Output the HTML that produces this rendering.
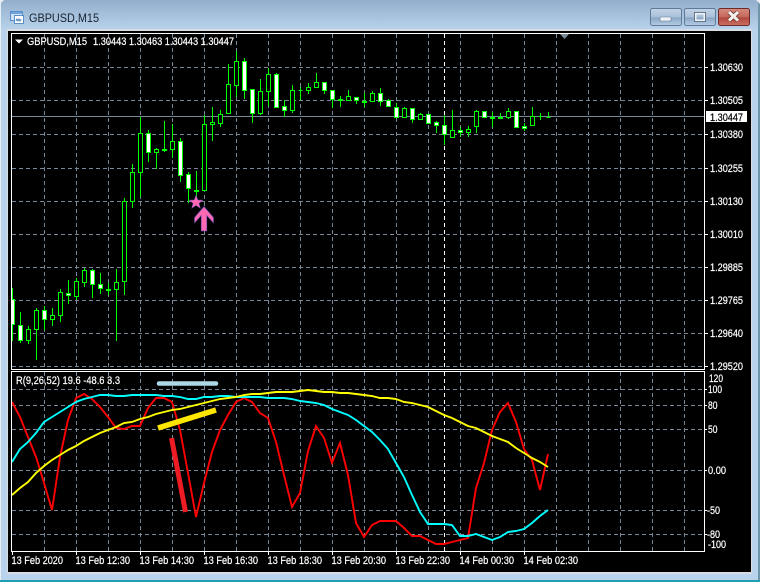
<!DOCTYPE html>
<html><head><meta charset="utf-8"><title>GBPUSD,M15</title>
<style>
html,body{margin:0;padding:0;width:760px;height:582px;overflow:hidden;background:#b9d3ec}
svg{position:absolute;left:0;top:0;display:block}
text{font-family:"Liberation Sans",sans-serif;font-size:11px;fill:#fff;stroke:#fff;stroke-width:.22px}
.g{stroke:#778899;stroke-width:1;stroke-dasharray:4 3;fill:none;shape-rendering:crispEdges}
</style></head><body>
<svg width="760" height="582" viewBox="0 0 760 582" xmlns="http://www.w3.org/2000/svg">
<defs>
<linearGradient id="tb" x1="0" y1="0" x2="0" y2="1"><stop offset="0" stop-color="#93aecb"/><stop offset="1" stop-color="#b9d3ec"/></linearGradient>
<linearGradient id="btn" x1="0" y1="0" x2="0" y2="1"><stop offset="0" stop-color="#c3d3e6"/><stop offset=".5" stop-color="#a9c0d9"/><stop offset=".55" stop-color="#8aa6c4"/><stop offset="1" stop-color="#b5cde6"/></linearGradient>
<linearGradient id="cl" x1="0" y1="0" x2="0" y2="1"><stop offset="0" stop-color="#d78d80"/><stop offset=".5" stop-color="#c4675a"/><stop offset=".55" stop-color="#b0463a"/><stop offset="1" stop-color="#cc7264"/></linearGradient>
<clipPath id="c1"><rect x="12" y="34" width="692" height="335"/></clipPath>
<clipPath id="c2"><rect x="12" y="372" width="692" height="179"/></clipPath>
</defs>
<rect width="760" height="582" fill="#b9d3ec"/>
<rect width="760" height="30" fill="url(#tb)"/>
<rect x="0" y="0" width="1" height="582" fill="#e6eef6"/>
<rect x="758" y="0" width="2" height="582" fill="#6f95a8"/>
<rect x="0" y="580" width="760" height="2" fill="#1f9fb0"/>
<path d="M0 0H4L0 4Z" fill="#e9edf1"/>
<path d="M760 0H756L760 4Z" fill="#e9edf1"/>
<!-- title icon -->
<g shape-rendering="crispEdges">
<rect x="10.500" y="11.500" width="12" height="9" fill="#cfe3f7" stroke="#5c8fc8"/>
<rect x="14.500" y="15.500" width="9" height="8" fill="#fff" stroke="#5c8fc8"/>
<rect x="11" y="12" width="11" height="2" fill="#6fa3dc"/>
<path d="M16 21l1-2 1 2 1-2 1 2 1-2" stroke="#3f78b8" fill="none"/>
</g>
<text x="29" y="22" textLength="70" lengthAdjust="spacingAndGlyphs" style="font-size:12px;fill:#17212e;stroke:none">GBPUSD,M15</text>
<!-- buttons -->
<rect x="650.500" y="8.500" width="31" height="17" rx="2" fill="url(#btn)" stroke="#5f7a98"/>
<rect x="660" y="17" width="11" height="4" rx="1" fill="#eef3f8" stroke="#65788e" stroke-width=".6"/>
<rect x="684.500" y="8.500" width="31" height="17" rx="2" fill="url(#btn)" stroke="#5f7a98"/>
<rect x="695.500" y="13.500" width="9" height="7" fill="none" stroke="#eef3f8" stroke-width="2"/>
<rect x="694.500" y="12.500" width="11" height="9" fill="none" stroke="#4d6178" stroke-width=".8"/>
<rect x="718.500" y="8.500" width="31" height="17" rx="2" fill="url(#cl)" stroke="#6e2a28"/>
<path d="M729 12l9 8.500M738 12l-9 8.500" stroke="#5a2a24" stroke-width="4.600"/>
<path d="M729 12l9 8.500M738 12l-9 8.500" stroke="#f4eeea" stroke-width="3.200"/>
<!-- window body -->
<rect x="7" y="29" width="745" height="545" fill="#d8dde3"/>
<rect x="8" y="31" width="743" height="541" fill="#000"/>
<!-- main grid -->
<g clip-path="url(#c1)">
<path class="g" d="M12 67.500H704M12 100.500H704M12 134.500H704M12 168.500H704M12 201.500H704M12 234.500H704M12 267.500H704M12 300.500H704M12 333.500H704M12 366.500H704"/>
<path class="g" d="M44.500 34V369M76.500 34V369M108.500 34V369M140.500 34V369M172.500 34V369M204.500 34V369M236.500 34V369M268.500 34V369M300.500 34V369M332.500 34V369M364.500 34V369M396.500 34V369M428.500 34V369M460.500 34V369M492.500 34V369M524.500 34V369M556.500 34V369M588.500 34V369M620.500 34V369M652.500 34V369M684.500 34V369"/>
<path d="M444.500 34V369" stroke="#fff" stroke-dasharray="4 3" shape-rendering="crispEdges"/>
<path d="M12 116.500H704" stroke="#778899" shape-rendering="crispEdges"/>
<!-- wicks -->
<path shape-rendering="crispEdges" stroke="#00ff00" fill="none" d="M12.500 288V341M20.500 312V343M28.500 326V344M36.500 308V360M44.500 306V330M52.500 308V326M60.500 289V322M68.500 280V304M76.500 278V300M84.500 268V287M92.500 269V298M100.500 273V294M108.500 283V295M116.500 269V341M124.500 198V295M132.500 164V208M140.500 117V197M148.500 130V162M156.500 148V169M164.500 121V152M172.500 124V158M180.500 138V182M188.500 172V203M196.500 171V197M204.500 115V191M212.500 107V141M220.500 110V127M228.500 64V114M236.500 51V97M244.500 58V99M252.500 89V123M260.500 79V115M268.500 68V106M276.500 73V107M284.500 100V117M292.500 85V113M300.500 87V100M308.500 83V94M316.500 73V87M324.500 82V94M332.500 90V108M340.500 96V107M348.500 90V100M356.500 97V104M364.500 93V107M372.500 91V102M380.500 88V106M388.500 99V106M396.500 103V117M404.500 107V117M412.500 108V123M420.500 113V119M428.500 114V123M436.500 121V133M444.500 115V145M452.500 110V137M460.500 127V137M468.500 126V137M476.500 110V133M484.500 111V117M492.500 112V127M500.500 113V119M508.500 108V119M516.500 111V127M524.500 123V131M532.500 107V125M540.500 113V120M548.500 112V117"/>
<!-- hollow -->
<path shape-rendering="crispEdges" stroke="#00ff00" fill="#000" d="M26.500 329.500h4v11h-4zM34.500 310.500h4v19h-4zM50.500 315.500h4v4h-4zM58.500 292.500h4v23h-4zM74.500 281.500h4v15h-4zM82.500 270.500h4v12h-4zM114.500 282.500h4v7h-4zM122.500 201.500h4v80h-4zM130.500 172.500h4v29h-4zM138.500 133.500h4v39h-4zM154.500 149.500h4v3h-4zM170.500 141.500h4v8h-4zM202.500 124.500h4v66h-4zM210.500 122.500h4v2h-4zM218.500 114.500h4v9h-4zM226.500 84.500h4v29h-4zM234.500 61.500h4v24h-4zM258.500 91.500h4v22h-4zM266.500 74.500h4v17h-4zM290.500 90.500h4v20h-4zM306.500 87.500h4v3h-4zM314.500 82.500h4v5h-4zM346.500 96.500h4v4h-4zM370.500 93.500h4v8h-4zM402.500 108.500h4v9h-4zM418.500 114.500h4v5h-4zM450.500 130.500h4v7h-4zM466.500 129.500h4v3h-4zM474.500 111.500h4v15h-4zM506.500 111.500h4v6h-4zM530.500 116.500h4v9h-4z"/>
<!-- white -->
<path shape-rendering="crispEdges" stroke="#00ff00" fill="#fff" d="M10.500 299.500h4v25h-4zM18.500 325.500h4v15h-4zM42.500 310.500h4v9h-4zM66.500 293.500h4v2h-4zM90.500 270.500h4v14h-4zM98.500 284.500h4v4h-4zM146.500 133.500h4v19h-4zM178.500 141.500h4v34h-4zM186.500 174.500h4v14h-4zM242.500 61.500h4v29h-4zM250.500 89.500h4v24h-4zM274.500 74.500h4v33h-4zM282.500 106.500h4v4h-4zM322.500 82.500h4v8h-4zM330.500 90.500h4v9h-4zM354.500 97.500h4v3h-4zM378.500 93.500h4v8h-4zM386.500 100.500h4v6h-4zM394.500 107.500h4v10h-4zM410.500 108.500h4v11h-4zM426.500 114.500h4v9h-4zM434.500 122.500h4v3h-4zM442.500 125.500h4v9h-4zM458.500 130.500h4v2h-4zM482.500 111.500h4v6h-4zM514.500 111.500h4v16h-4zM522.500 126.500h4v2h-4z"/>
<!-- doji -->
<path shape-rendering="crispEdges" stroke="#00ff00" fill="#00ff00" d="M106.500 289.500h4v1h-4zM162.500 149.500h4v1h-4zM194.500 190.500h4v1h-4zM298.500 90.500h4v0h-4zM338.500 99.500h4v1h-4zM362.500 101.500h4v1h-4zM490.500 117.500h4v1h-4zM498.500 117.500h4v1h-4zM538.500 116.500h4v0h-4zM546.500 117.500h4v0h-4z"/>
</g>
<!-- star and arrow -->
<path d="M196 195l1.900 5 5.200.1-4.100 3.200 1.500 5.100-4.500-3-4.400 3 1.500-5.100-4.200-3.200 5.300-.1z" fill="#ff69b4" stroke="#5a4ab0" stroke-width=".5"/>
<path d="M204 206.500l9.500 11v5.500l-6.700-7.500V231h-5.600V215.500L194.500 223v-5.500z" fill="#ff69b4" stroke="#5f46a8" stroke-width=".6"/>
<!-- chart borders -->
<rect x="11.500" y="33.500" width="693" height="336" fill="none" stroke="#fff" shape-rendering="crispEdges"/>
<path d="M560 34h9l-4.500 5z" fill="#778899"/>
<text x="27" y="45" textLength="60" lengthAdjust="spacingAndGlyphs">GBPUSD,M15</text>
<text x="93" y="45" textLength="141" lengthAdjust="spacingAndGlyphs">1.30443 1.30463 1.30443 1.30447</text>
<path d="M15 39.500h8l-4 4z" fill="#fff"/>
<!-- sub window -->
<g clip-path="url(#c2)">
<path class="g" d="M12 389.500H704M12 405.500H704M12 429.500H704M12 470.500H704M12 510.500H704M12 534.500H704"/>
<path class="g" d="M44.500 372V551M76.500 372V551M108.500 372V551M140.500 372V551M172.500 372V551M204.500 372V551M236.500 372V551M268.500 372V551M300.500 372V551M332.500 372V551M364.500 372V551M396.500 372V551M428.500 372V551M460.500 372V551M492.500 372V551M524.500 372V551M556.500 372V551M588.500 372V551M620.500 372V551M652.500 372V551M684.500 372V551"/>
<path d="M444.500 372V551" stroke="#fff" stroke-dasharray="4 3" shape-rendering="crispEdges"/>
<polyline fill="none" stroke="#ff0000" stroke-width="1.900" points="12,402 20,417 28,437 36,457 44,483 52,510 60,457 68,420 76,398 84,394 92,399 100,407 108,417 116,428 124,429 132,426 140,426 148,408 156,398 164,398 172,402 180,430 188,473 196,517 204,483 212,452 220,430 228,415 236,402 244,398 252,402 260,413 268,418 276,442 284,475 292,507 300,493 308,451 316,426 324,438 332,463 340,443 348,475 356,523 364,537 372,525 380,521 388,521 396,521 404,528 412,536 420,536 428,540 436,544 444,544 452,542 460,540 468,538 476,488 484,463 492,430 500,412 508,403 516,422 524,449 532,460 540,490 548,454"/>
<polyline fill="none" stroke="#00ffff" stroke-width="1.900" points="12,462 20,449 28,442 36,433 44,422 52,417 60,412 68,407 76,402 84,399 92,397 100,395 108,395 116,396 124,396 132,395 140,395 148,395 156,395 164,396 172,396 180,397 188,399 196,399 204,397 212,397 220,396 228,396 236,397 244,397 252,397 260,397 268,398 276,398 284,398 292,399 300,401 308,402 316,403 324,405 332,409 340,412 348,415 356,420 364,426 372,432 380,440 388,449 396,463 404,477 412,495 420,512 428,524 436,524 444,524 452,525 460,536 468,536 476,534 484,537 492,540 500,537 508,532 516,531 524,529 532,523 540,516 548,510"/>
<polyline fill="none" stroke="#ffff00" stroke-width="1.900" points="12,495 20,488 28,482 36,473 44,466 52,460 60,455 68,450 76,446 84,441 92,437 100,433 108,430 116,427 124,423 132,422 140,419 148,417 156,414 164,412 172,410 180,409 188,407 196,405 204,403 212,401 220,399 228,398 236,397 244,395 252,394 260,394 268,393 276,392 284,392 292,392 300,391 308,390 316,391 324,392 332,392 340,393 348,393 356,394 364,395 372,396 380,398 388,398 396,399 404,402 412,403 420,405 428,407 436,411 444,415 452,418 460,422 468,426 476,428 484,432 492,436 500,439 508,442 516,448 524,453 532,458 540,462 548,467"/>
</g>
<path d="M159 383.500H216" stroke="#add8e6" stroke-width="4.500" stroke-linecap="round"/>
<path d="M158 428L216 410" stroke="#ffe600" stroke-width="5.500"/>
<path d="M171.500 438L185.500 512" stroke="#ed1c24" stroke-width="5"/>
<rect x="11.500" y="371.500" width="693" height="180" fill="none" stroke="#fff" shape-rendering="crispEdges"/>
<text x="16" y="384" textLength="104" lengthAdjust="spacingAndGlyphs">R(9,26,52) 19.6 -48.6 3.3</text>
<!-- ticks -->
<path shape-rendering="crispEdges" stroke="#fff" d="M705 67.500h3M705 100.500h3M705 134.500h3M705 168.500h3M705 201.500h3M705 234.500h3M705 267.500h3M705 300.500h3M705 333.500h3M705 366.500h3M705 389.500h2M705 405.500h2M705 429.500h2M705 470.500h2M705 510.500h2M705 534.500h2M12.500 552v3M76.500 552v3M140.500 552v3M204.500 552v3M268.500 552v3M332.500 552v3M396.500 552v3M460.500 552v3M524.500 552v3"/>
<!-- price labels -->
<text x="710" y="71" textLength="33" lengthAdjust="spacingAndGlyphs">1.30630</text>
<text x="710" y="104" textLength="33" lengthAdjust="spacingAndGlyphs">1.30505</text>
<text x="710" y="138" textLength="33" lengthAdjust="spacingAndGlyphs">1.30380</text>
<text x="710" y="172" textLength="33" lengthAdjust="spacingAndGlyphs">1.30255</text>
<text x="710" y="205" textLength="33" lengthAdjust="spacingAndGlyphs">1.30130</text>
<text x="710" y="238" textLength="33" lengthAdjust="spacingAndGlyphs">1.30010</text>
<text x="710" y="271" textLength="33" lengthAdjust="spacingAndGlyphs">1.29885</text>
<text x="710" y="304" textLength="33" lengthAdjust="spacingAndGlyphs">1.29765</text>
<text x="710" y="337" textLength="33" lengthAdjust="spacingAndGlyphs">1.29640</text>
<text x="710" y="370" textLength="33" lengthAdjust="spacingAndGlyphs">1.29520</text>
<rect x="706" y="111" width="41" height="11" fill="#fff"/>
<text x="710" y="121" textLength="33" lengthAdjust="spacingAndGlyphs" style="fill:#000;stroke:#000">1.30447</text>
<!-- indicator labels -->
<text x="709" y="382" textLength="14" lengthAdjust="spacingAndGlyphs">120</text>
<text x="708" y="393" textLength="14" lengthAdjust="spacingAndGlyphs">100</text>
<text x="708" y="409" textLength="9.500" lengthAdjust="spacingAndGlyphs">80</text>
<text x="708" y="433" textLength="9.500" lengthAdjust="spacingAndGlyphs">50</text>
<text x="708" y="474" textLength="18" lengthAdjust="spacingAndGlyphs">0.00</text>
<text x="707" y="514" textLength="13" lengthAdjust="spacingAndGlyphs">-50</text>
<text x="707" y="538" textLength="13" lengthAdjust="spacingAndGlyphs">-80</text>
<text x="708" y="548" textLength="18" lengthAdjust="spacingAndGlyphs">-100</text>
<!-- time labels -->
<text x="11.500" y="564" textLength="51.500" lengthAdjust="spacingAndGlyphs">13 Feb 2020</text>
<text x="75.500" y="564" textLength="54.500" lengthAdjust="spacingAndGlyphs">13 Feb 12:30</text>
<text x="139.500" y="564" textLength="54.500" lengthAdjust="spacingAndGlyphs">13 Feb 14:30</text>
<text x="203.500" y="564" textLength="54.500" lengthAdjust="spacingAndGlyphs">13 Feb 16:30</text>
<text x="267.500" y="564" textLength="54.500" lengthAdjust="spacingAndGlyphs">13 Feb 18:30</text>
<text x="331.500" y="564" textLength="54.500" lengthAdjust="spacingAndGlyphs">13 Feb 20:30</text>
<text x="395.500" y="564" textLength="54.500" lengthAdjust="spacingAndGlyphs">13 Feb 22:30</text>
<text x="459.500" y="564" textLength="54.500" lengthAdjust="spacingAndGlyphs">14 Feb 00:30</text>
<text x="523.500" y="564" textLength="54.500" lengthAdjust="spacingAndGlyphs">14 Feb 02:30</text>
</svg>
</body></html>
